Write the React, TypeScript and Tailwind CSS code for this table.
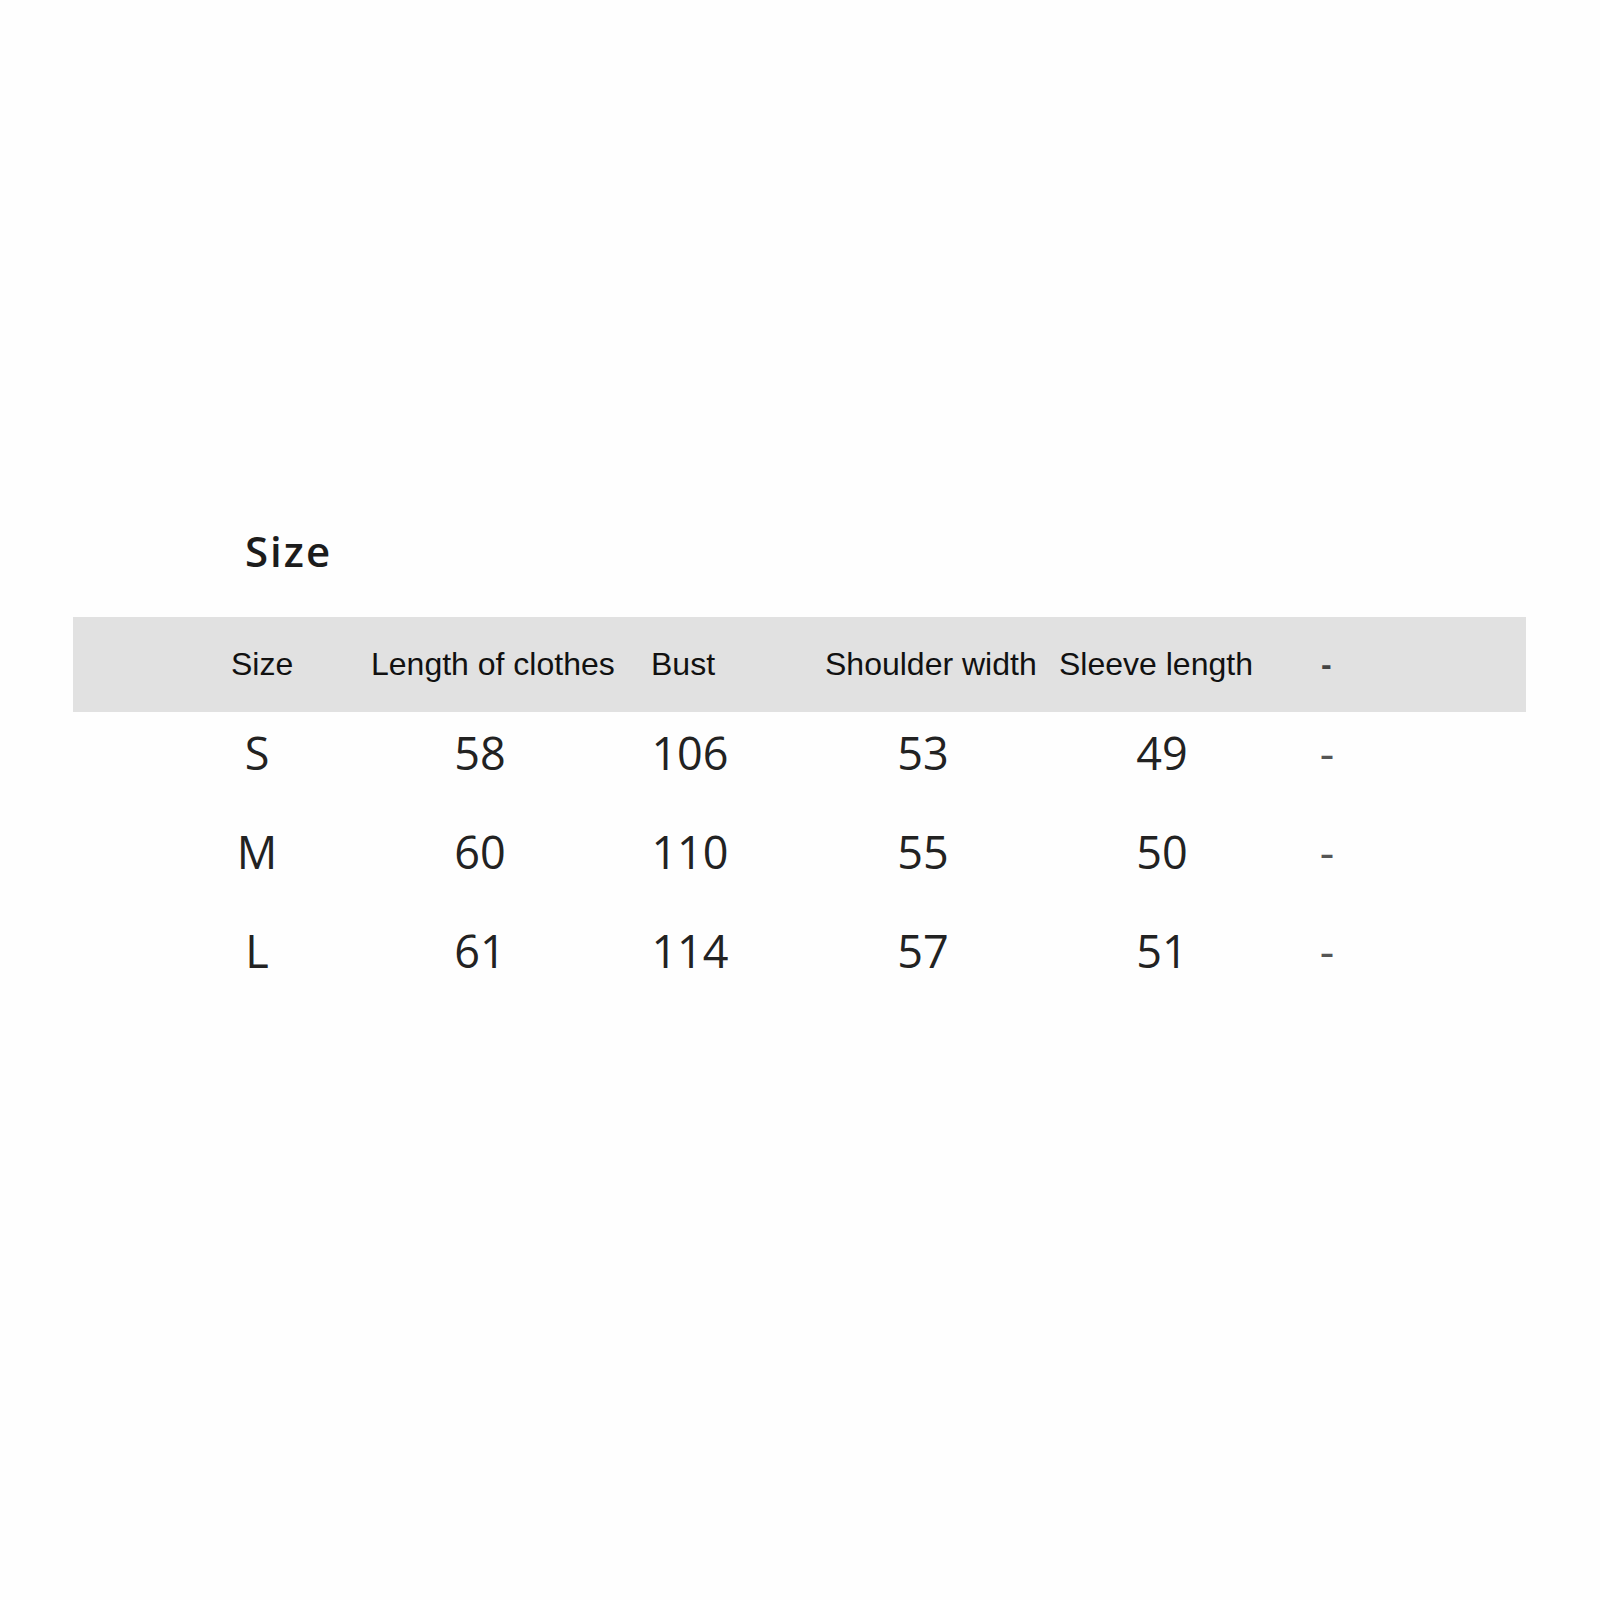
const headers = ["Size", "Length of clothes", "Bust", "Shoulder width", "Sleeve length", "-"];

// header cells are left aligned, so widths are the gaps between label starts
const headerWidths = ["w-[140px]", "w-[280px]", "w-[174px]", "w-[234px]", "w-[262px]", "w-[60px]"];

// data cells are centred under each column
const cellWidths = ["w-[114px]", "w-[332px]", "w-[88px]", "w-[378px]", "w-[100px]", "w-[230px]"];

const rows = [
  ["S", "58", "106", "53", "49", "-"],
  ["M", "60", "110", "55", "50", "-"],
  ["L", "61", "114", "57", "51", "-"],
];

export default function App() {
  return (
    <div className="w-[1600px] h-[1600px] bg-[#fefefe] pt-[530px]">
      <h1 className="pl-[245px] text-[42px] leading-none font-semibold tracking-[2px] text-[#1c1c1c] font-['Open_Sans',sans-serif]">
        Size
      </h1>

      <div className="mt-[45px] ml-[73px] w-[1453px] h-[95px] bg-[#e1e1e1] pt-[31px] pl-[158px] flex font-['Liberation_Sans',Arial,sans-serif] text-[32px] leading-none text-[#111]">
        {headers.map((h, i) => (
          <div key={i} className={`${headerWidths[i]} shrink-0 whitespace-nowrap ${h === "-" ? "text-[#444] font-bold" : ""}`}>
            {h}
          </div>
        ))}
      </div>

      <div className="mt-[18px] pl-[200px] font-['Open_Sans',sans-serif] text-[45px] leading-none font-medium text-[#222]">
        {rows.map((row, r) => (
          <div key={r} className="flex h-[99px]">
            {row.map((v, i) => (
              <div key={i} className={`${cellWidths[i]} shrink-0 text-center ${v === "-" ? "text-[#555] font-normal" : ""}`}>
                {v}
              </div>
            ))}
          </div>
        ))}
      </div>
    </div>
  );
}
